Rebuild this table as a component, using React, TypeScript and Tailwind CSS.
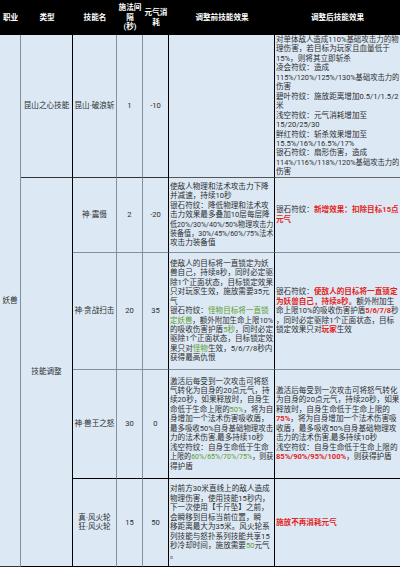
import React, { useLayoutEffect, useRef, useState } from "react";

const R = ({ children }: { children: React.ReactNode }) => (
  <span className="text-[#e3241b] font-bold">{children}</span>
);
const G = ({ children }: { children: React.ReactNode }) => (
  <span className="text-[#5f9e2f]">{children}</span>
);

const FitLine = ({ children }: { children: React.ReactNode }) => {
  const outer = useRef<HTMLDivElement>(null);
  const inner = useRef<HTMLSpanElement>(null);
  const [scale, setScale] = useState(1);
  useLayoutEffect(() => {
    const o = outer.current;
    const i = inner.current;
    if (!o || !i) return;
    const cw = o.clientWidth;
    const iw = i.offsetWidth;
    if (iw > cw && iw > 0) setScale(cw / iw);
  }, []);
  return (
    <div ref={outer} className="w-full overflow-hidden whitespace-nowrap">
      <span
        ref={inner}
        className="inline-block origin-left whitespace-nowrap"
        style={scale < 1 ? { transform: `scaleX(${scale})` } : undefined}
      >
        {children}
      </span>
    </div>
  );
};

const Lines = ({ lines }: { lines: React.ReactNode[] }) => (
  <div className="w-full overflow-hidden">
    {lines.map((l, i) => (
      <FitLine key={i}>{l}</FitLine>
    ))}
  </div>
);

const row1After = [
  "对单体敌人造成110%基础攻击力的物",
  "理伤害，若目标为玩家且血量低于",
  "15%，则将其立即斩杀",
  "凌会符纹：造成",
  "115%/120%/125%/130%基础攻击力的",
  "伤害",
  "碧叶符纹：施放距离增加0.5/1/1.5/2",
  "米",
  "浅空符纹：元气消耗增加至",
  "15/20/25/30",
  "鲜红符纹：斩杀效果增加至",
  "15.5%/16%/16.5%/17%",
  "银石符纹：扇形伤害，造成",
  "114%/116%/118%/120%基础攻击力的",
  "伤害",
];

const row2Before = [
  "使敌人物理和法术攻击力下降",
  "并减速，持续10秒",
  "银石符纹：降低物理和法术攻",
  "击力效果最多叠加10层每层降",
  "低20%/30%/40%/50%物理攻击力",
  "装备值，30%/45%/60%/75%法术",
  "攻击力装备值",
];

const row2After = [
  <>
    银石符纹：<R>新增效果：扣除目标15点</R>
  </>,
  <R>元气</R>,
];

const row3Before = [
  "使敌人的目标将一直锁定为妖",
  "兽自己，持续8秒，同时必定驱",
  "除1个正面状态，目标锁定效果",
  "只对玩家生效，施放需要35元",
  "气",
  <>
    银石符纹：<G>怪物目标将一直锁</G>
  </>,
  <>
    <G>定妖兽</G>，额外附加生命上限10%
  </>,
  <>
    的吸收伤害护盾<G>5秒</G>，同时必定
  </>,
  "驱除1个正面状态，目标锁定效",
  <>
    果只对<G>怪物</G>生效，5/6/7/8秒内
  </>,
  "获得最高仇恨",
];

const row3After = [
  <>
    银石符纹：<R>使敌人的目标将一直锁定</R>
  </>,
  <>
    <R>为妖兽自己，持续8秒。</R>额外附加生
  </>,
  <>
    命上限10%的吸收伤害护盾<R>5/6/7/8</R>秒
  </>,
  "，同时必定驱除1个正面状态，目标",
  <>
    锁定效果只对<R>玩家</R>生效
  </>,
];

const row4Before = [
  "激活后每受到一次攻击可将怒",
  "气转化为自身的20点元气，持",
  "续20秒，如果释放时，自身生",
  <>
    命低于生命上限的<G>50%</G>，将为自
  </>,
  "身增加一个法术伤害吸收盾，",
  "最多吸收50%自身基础物理攻击",
  "力的法术伤害,最多持续10秒",
  "浅空符纹：自身生命低于生命",
  <>
    上限的<G>60%/65%/70%/75%</G>，则获
  </>,
  "得护盾",
];

const row4After = [
  "激活后每受到一次攻击可将怒气转化",
  "为自身的20点元气，持续20秒，如果",
  "释放时，自身生命低于生命上限的",
  <>
    <R>75%</R>，将为自身增加一个法术伤害吸
  </>,
  "收盾，最多吸收50%自身基础物理攻",
  "击力的法术伤害,最多持续10秒",
  "浅空符纹：自身生命低于生命上限的",
  <>
    <R>85%/90%/95%/100%</R>，则获得护盾
  </>,
];

const row5Before = [
  "对前方30米直线上的敌人造成",
  "物理伤害，使用技能15秒内，",
  "下一次使用【千斤坠】之前，",
  "会瞬移到目标当前位置，瞬",
  "移距离最大为35米。风火轮系",
  "列技能与怒扑系列技能共享15",
  <>
    秒冷却时间，施放需要<G>50</G>元气
  </>,
  "。",
];

export default function App() {
  const grey = "border-[#86909a]";
  const c = "p-0 text-center align-middle whitespace-nowrap";
  const t = "p-0 pl-[1px] pr-[1px] align-middle";
  return (
    <div className="w-[400px] h-[567px] bg-[#dce9f5] overflow-hidden">
      <table className="table-fixed border-separate border-spacing-0 w-[400px] text-[7.6px] leading-[9.45px] text-[#2e2e2e] font-['Roboto','Noto_Sans_CJK_SC',sans-serif]">
        <colgroup>
          <col className="w-[21px]" />
          <col className="w-[52px]" />
          <col className="w-[44px]" />
          <col className="w-[26px]" />
          <col className="w-[26px]" />
          <col className="w-[106px]" />
          <col className="w-[125px]" />
        </colgroup>
        <thead>
          <tr className="h-[35px] bg-black text-white text-center">
            <th className="p-0 font-bold">职业</th>
            <th className="p-0 font-bold">类型</th>
            <th className="p-0 font-bold">技能名</th>
            <th className="p-0 font-bold">
              施法间
              <br />
              隔
              <br />
              (秒)
            </th>
            <th className="p-0 font-bold">
              元气消
              <br />
              耗
            </th>
            <th className="p-0 font-bold">调整前技能效果</th>
            <th className="p-0 font-bold">调整后技能效果</th>
          </tr>
        </thead>
        <tbody>
          <tr className="h-[142px]">
            <td rowSpan={5} className={`${c} border-r border-b border-b-[#333] ${grey}`}>
              妖兽
            </td>
            <td className={`${c} border-r border-r-black border-b border-b-[#333]`}>
              昆山之心技能
            </td>
            <td className={`${c} border-r ${grey} border-b border-b-[#333]`}>
              昆山·破浪斩
            </td>
            <td className={`${c} border-r ${grey} border-b border-b-[#333]`}>1</td>
            <td className={`${c} border-r border-r-black border-b border-b-[#333]`}>-10</td>
            <td className="p-0 border-r border-r-black border-b border-b-[#555]"></td>
            <td className={`${t} border-b border-b-[#666]`}>
              <Lines lines={row1After} />
            </td>
          </tr>
          <tr className="h-[75px]">
            <td rowSpan={4} className={`${c} border-r border-r-black border-b border-b-black`}>
              技能调整
            </td>
            <td className={`${c} border-r ${grey} border-b`}>神·震慑</td>
            <td className={`${c} border-r ${grey} border-b`}>2</td>
            <td className={`${c} border-r border-r-black border-b ${grey}`}>-20</td>
            <td className={`${t} border-r border-r-black border-b ${grey}`}>
              <Lines lines={row2Before} />
            </td>
            <td className={`${t} border-b ${grey}`}>
              <Lines lines={row2After} />
            </td>
          </tr>
          <tr className="h-[117px]">
            <td className={`${c} border-r ${grey} border-b`}>神·贪战扫击</td>
            <td className={`${c} border-r ${grey} border-b`}>20</td>
            <td className={`${c} border-r border-r-black border-b ${grey}`}>35</td>
            <td className={`${t} border-r border-r-black border-b ${grey}`}>
              <Lines lines={row3Before} />
            </td>
            <td className={`${t} border-b ${grey}`}>
              <Lines lines={row3After} />
            </td>
          </tr>
          <tr className="h-[109px]">
            <td className={`${c} border-r ${grey} border-b border-b-black`}>神·兽王之怒</td>
            <td className={`${c} border-r ${grey} border-b border-b-black`}>30</td>
            <td className={`${c} border-r border-r-black border-b border-b-black`}>0</td>
            <td className={`${t} border-r border-r-black border-b border-b-black`}>
              <Lines lines={row4Before} />
            </td>
            <td className={`${t} border-b border-b-black`}>
              <Lines lines={row4After} />
            </td>
          </tr>
          <tr className="h-[88px]">
            <td className={`${c} border-r ${grey} border-b border-b-black`}>
              真·风火轮
              <br />
              狂·风火轮
            </td>
            <td className={`${c} border-r ${grey} border-b border-b-black`}>15</td>
            <td className={`${c} border-r border-r-black border-b border-b-black`}>50</td>
            <td className={`${t} border-r border-r-black border-b border-b-black`}>
              <Lines lines={row5Before} />
            </td>
            <td className={`${t} border-b border-b-black`}>
              <Lines lines={[<R>施放不再消耗元气</R>]} />
            </td>
          </tr>
        </tbody>
      </table>
    </div>
  );
}
